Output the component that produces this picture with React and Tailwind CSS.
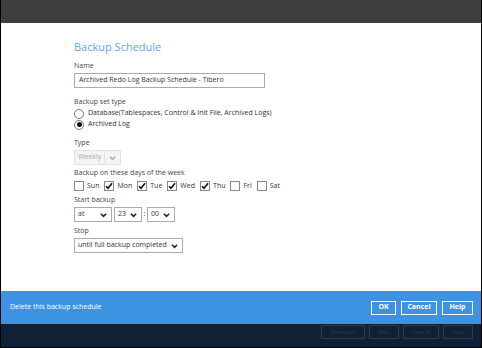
import { useState } from 'react';

const DAYS = [
  { name: 'Sun', on: false },
  { name: 'Mon', on: true },
  { name: 'Tue', on: true },
  { name: 'Wed', on: true },
  { name: 'Thu', on: true },
  { name: 'Fri', on: false },
  { name: 'Sat', on: false },
];

function Chevron({ className = 'text-[#222]' }) {
  return (
    <svg width="7" height="6" viewBox="0 0 8 6" className={`shrink-0 ${className}`}>
      <polyline points="1,1.5 4,4.5 7,1.5" fill="none" stroke="currentColor" strokeWidth="1.8" />
    </svg>
  );
}

function Select({ value, width, disabled }) {
  return (
    <div
      className={`h-[15px] flex items-center justify-between border pl-[3px] text-[7px] ${
        disabled
          ? 'border-[#e2e2e2] bg-[#f4f4f4] text-[#aaa] pr-0'
          : 'border-[#aaa] bg-white text-[#333] pr-[4px]'
      }`}
      style={{ width }}
    >
      <span className="whitespace-nowrap">{value}</span>
      {disabled ? (
        <span className="flex items-center h-full border-l border-[#e2e2e2] px-[4px]">
          <Chevron className="text-[#9fb3c8]" />
        </span>
      ) : (
        <Chevron />
      )}
    </div>
  );
}

function Label({ children, className = '' }) {
  return <div className={`h-[10px] leading-[10px] text-[7px] text-[#444] ${className}`}>{children}</div>;
}

function Radio({ checked, label }) {
  return (
    <div className="h-[11px] flex items-center gap-[4px] text-[7px] text-[#333]">
      <span className="w-[10px] h-[10px] rounded-full border border-[#777] bg-white flex items-center justify-center">
        {checked && <span className="w-[5px] h-[5px] rounded-full bg-[#111]" />}
      </span>
      {label}
    </div>
  );
}

function Check({ on, label }) {
  return (
    <div className="flex items-center gap-[3px] text-[7px] text-[#333]">
      <span className="w-[10px] h-[10px] border border-[#888] bg-white flex items-center justify-center">
        {on && (
          <svg width="8" height="8" viewBox="0 0 8 8">
            <polyline points="1,4.2 3,6.3 7,1.3" fill="none" stroke="#111" strokeWidth="1.6" />
          </svg>
        )}
      </span>
      {label}
    </div>
  );
}

export default function App() {
  const [name] = useState('Archived Redo Log Backup Schedule - Tibero');

  return (
    <div
      className="w-[482px] h-[348px] flex flex-col overflow-hidden border-x border-b border-black bg-white"
      style={{ fontFamily: '"Open Sans", "Noto Sans", sans-serif' }}
    >
      <div className="h-[23px] bg-[#3e3e3e] shrink-0" />

      {/* Form */}
      <div className="h-[268px] shrink-0 pl-[73px] pt-[16px]">
        <div className="h-[16px] leading-[16px] text-[11px] text-[#5fa7e6]">Backup Schedule</div>

        <Label className="mt-[6px]">Name</Label>
        <div className="mt-[2px] w-[191px] h-[15px] border border-[#aaa] px-[4px] flex items-center text-[7px] text-[#333]">
          {name}
        </div>

        <Label className="mt-[9px]">Backup set type</Label>
        <div className="mt-[1px]">
          <Radio label="Database(Tablespaces, Control & Init File, Archived Logs)" />
          <Radio checked label="Archived Log" />
        </div>

        <Label className="mt-[8px]">Type</Label>
        <div className="mt-[2px]">
          <Select value="Weekly" width={47} disabled />
        </div>

        <Label className="mt-[3px]">Backup on these days of the week</Label>
        <div className="mt-[2px] flex gap-[5px] h-[12px] items-center">
          {DAYS.map((d) => (
            <Check key={d.name} on={d.on} label={d.name} />
          ))}
        </div>

        <Label className="mt-[3px]">Start backup</Label>
        <div className="mt-[2px] flex items-center">
          <Select value="at" width={38} />
          <div className="ml-[2px]">
            <Select value="23" width={28} />
          </div>
          <span className="w-[5px] text-center text-[7px] text-[#333]">:</span>
          <Select value="00" width={28} />
        </div>

        <Label className="mt-[4px]">Stop</Label>
        <div className="mt-[2px]">
          <Select value="until full backup completed" width={109} />
        </div>
      </div>

      {/* Dialog footer */}
      <div className="h-[33px] shrink-0 bg-[#3d93e2] flex items-center justify-between pl-[9px] pr-[8px]">
        <span className="text-[7px] text-white">Delete this backup schedule</span>
        <div className="flex gap-[5px]">
          {[
            ['OK', 25],
            ['Cancel', 36],
            ['Help', 31],
          ].map(([t, w]) => (
            <div
              key={t}
              className="h-[14px] border border-white flex items-center justify-center text-[7px] font-bold text-white"
              style={{ width: w }}
            >
              {t}
            </div>
          ))}
        </div>
      </div>

      {/* Wizard buttons underneath */}
      <div className="flex-1 bg-[#102036] flex justify-end items-start pt-[1px] pr-[8px] gap-[4px]">
        {[
          ['Previous', 44],
          ['Next', 30],
          ['Cancel', 36],
          ['Help', 30],
        ].map(([t, w]) => (
          <div
            key={t}
            className="h-[14px] border border-[#2c3c52] flex items-center justify-center text-[6px] text-[#2c3c52]"
            style={{ width: w }}
          >
            {t}
          </div>
        ))}
      </div>
    </div>
  );
}
